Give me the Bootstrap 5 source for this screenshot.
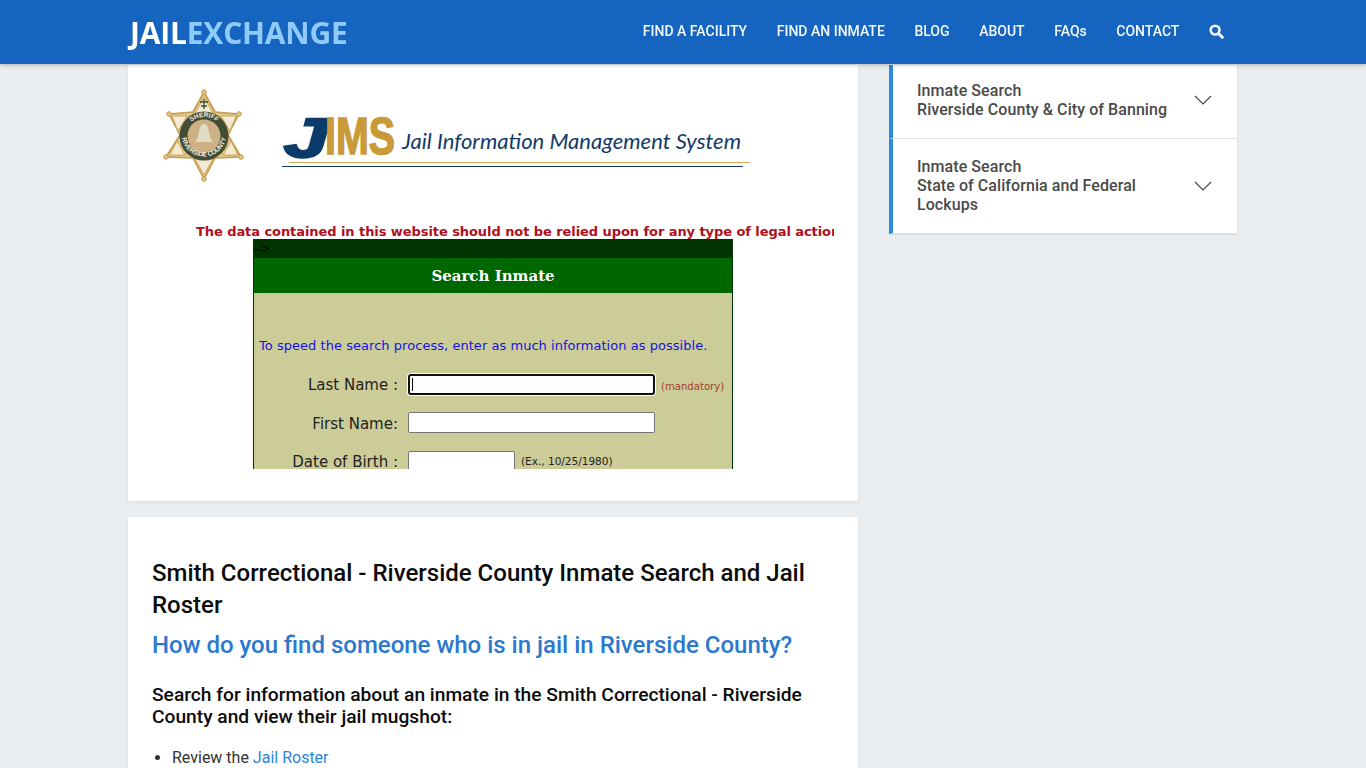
<!DOCTYPE html>
<html lang="en">
<head>
<meta charset="utf-8">
<title>Smith Correctional - Riverside County Inmate Search and Jail Roster</title>
<link rel="stylesheet" href="https://cdn.jsdelivr.net/npm/bootstrap@5.3.0/dist/css/bootstrap.min.css">
<style>
html,body{height:768px;overflow:hidden}
body{background:#eaeef1;font-family:Roboto,sans-serif;color:#333}
.topbar{height:64px;background:#1565c0;box-shadow:0 1px 4px rgba(0,0,0,.25);padding:0}
.wrap-x{width:1110px;margin:0 auto}
.brand-x{font-family:"Open Sans",sans-serif;font-weight:700;font-size:30px;line-height:1;letter-spacing:-.2px;color:#fff;text-decoration:none;padding:1px 0 0 2px}
.brand-x span{color:#90caf9}
.navlink-x{font-size:14px;font-weight:500;color:#f1f8fe;text-decoration:none}
.menu-x{gap:29.6px;padding-right:14px;margin-top:-2px}
.page-x{padding-top:65px;gap:31px;align-items:flex-start}
.maincol{width:730px;flex:none}
.sidecol{width:349px;flex:none}
.panel-x{background:#fff;box-shadow:0 1px 3px rgba(0,0,0,.08)}
.panel-top{height:436px;padding:0 24px;margin-bottom:16px}
.frame-x{width:682px;height:404px;overflow:hidden}
.logo-row{height:150px;padding-top:23px}
.star-x{margin-left:11px;flex:none}
.jims-x{margin-left:37px;flex:none}
.warn-x{font-family:"DejaVu Sans",sans-serif;font-weight:700;font-size:13px;letter-spacing:-.07px;line-height:16px;color:#b00f1c;white-space:nowrap;padding-left:44px;margin-top:9px;height:15px}
.form-x{width:480px;margin:0 0 0 101px;height:230px;overflow:hidden;background:#cccc99;border-left:1px solid #003300;border-right:1px solid #003300;font-family:"DejaVu Sans",sans-serif}
.f-dark{height:19px;background:#003300;font-size:11px;line-height:19px;color:#000;margin:0 -1px}
.f-head{height:35px;background:#006600;color:#fff;font-family:"DejaVu Serif",serif;font-weight:700;font-size:15px;line-height:36px;text-align:center;margin:0 -1px}
.f-note{color:#1414e0;font-size:13px;letter-spacing:.04px;line-height:16px;padding:45px 0 0 5px;white-space:nowrap;height:73px}
.f-row{height:38.5px;font-size:15px;color:#222}
.f-label{width:144px;text-align:right;flex:none;white-space:nowrap}
.f-box{background:#fff;border:1px solid #767676;border-radius:2px;height:21px;margin:0 0 2px 10px;flex:none}
.f-box.tall-x{height:23px;margin:1px 0 0 10px}
.f-box.focus-x{border:2px solid #101010;border-radius:3px;position:relative;box-shadow:0 0 0 1px #fff}
.f-box.focus-x::before{content:"";position:absolute;left:2px;top:2px;bottom:2px;width:1px;background:#000}
.f-hint{font-size:10.5px;margin-left:6px;white-space:nowrap}
.hint-red{color:#a33c2c;font-size:10.1px;margin-top:2px}
.w-long{width:247px}
.w-short{width:107px}
.panel-body-x{padding:40px 24px;height:600px}
.h-one{font-size:24px;font-weight:500;line-height:32px;color:#0b0b0b;margin:0 0 8px}
.h-two{font-size:24px;font-weight:500;line-height:32px;color:#2b78cf;margin:0 0 23px}
.h-three{font-size:19.2px;font-weight:500;line-height:22px;color:#0b0b0b;margin:0 0 18px}
.list-x{font-size:16px;line-height:24px;padding-left:20px;margin:0}
.list-x a{color:#2b84d8;text-decoration:none}
.acc-x{background:#fff;border-left:4px solid #2b8ade;border-right:1px solid #dde2e6;color:#4a4a4a;font-size:16px;letter-spacing:.07px;font-weight:500;line-height:19px;padding:0 25px 0 24px;box-shadow:0 1px 1px rgba(0,0,0,.05)}
.acc-x.one{height:74px;border-bottom:1px solid #dde2e6;padding-bottom:4px}
.acc-x.two{height:95px;border-bottom:1px solid #dde2e6;padding-bottom:2px}
.acc-x.two svg{margin-top:2px}
.acc-text{width:258px}
</style>
</head>
<body>
<nav class="navbar fixed-top topbar">
  <div class="wrap-x d-flex align-items-center justify-content-between h-100">
    <a class="brand-x" href="#">JAIL<span>EXCHANGE</span></a>
    <div class="d-flex align-items-center menu-x">
      <a class="navlink-x" href="#">FIND A FACILITY</a>
      <a class="navlink-x" href="#">FIND AN INMATE</a>
      <a class="navlink-x" href="#">BLOG</a>
      <a class="navlink-x" href="#">ABOUT</a>
      <a class="navlink-x" href="#">FAQs</a>
      <a class="navlink-x" href="#">CONTACT</a>
      <a class="navlink-x d-flex" href="#" aria-label="Search">
        <svg width="15" height="15" viewBox="0 0 16 16" fill="none" stroke="#f1f8fe"><circle cx="6.500" cy="6.500" r="4.700" stroke-width="2.800"/><path d="M10.300 10.300l3.900 3.900" stroke-width="3.200" stroke-linecap="round"/></svg>
      </a>
    </div>
  </div>
</nav>

<div class="wrap-x d-flex page-x">
  <div class="maincol">
    <div class="panel-x panel-top">
      <div class="frame-x">
        <div class="logo-row d-flex">
          <svg width="82" height="96" viewBox="0 0 82 96" class="star-x">
            <polygon points="41,4 52,24 76,26 65,47 78,69 52,70 41,91 30,70 3,69 17,47 6,26 30,24" fill="#e3c986" stroke="#c39a52" stroke-width="1.600" stroke-linejoin="round"/>
            <g fill="#e3c78a" stroke="#c39a52">
              <circle cx="41" cy="4" r="2.300"/><circle cx="76" cy="26" r="2.300"/><circle cx="78" cy="69" r="2.300"/><circle cx="41" cy="91" r="2.300"/><circle cx="3" cy="69" r="2.300"/><circle cx="6" cy="26" r="2.300"/>
            </g>
            <path d="M41 9 30 29H52ZM41 87 30 67H52ZM9 28H24L15 43ZM73 28H58L67 43ZM7 67H22L14 53ZM75 67H60L68 53Z" fill="#f4ead0" stroke="#c39a52" stroke-width=".8"/>
            <path d="M41 11v10M37 14h8M38 18h6" stroke="#3c4a33" stroke-width="1.300" fill="none"/>
            <circle cx="41" cy="48" r="24.500" fill="#414d35"/>
            <circle cx="41" cy="48" r="16.500" fill="#cdb083"/>
            <path d="M41 36c-3 0-4 3-5 8-1 5-2 8-4 10h18c-2-2-3-5-4-10-1-5-2-8-5-8z" fill="#e2dcc4"/>
            <defs>
              <path id="arcT" d="M22 48a19 19 0 0 1 38 0"/>
              <path id="arcB" d="M17.500 46a23.500 23.500 0 0 0 47 0"/>
            </defs>
            <text font-family="Liberation Sans,sans-serif" font-weight="700" font-size="6.500" fill="#f3efe2" text-anchor="middle"><textPath href="#arcT" startOffset="50%">SHERIFF</textPath></text>
            <text font-family="Liberation Sans,sans-serif" font-weight="700" font-size="6.500" fill="#f3efe2" text-anchor="middle" dy="-1"><textPath href="#arcB" startOffset="50%">RIVERSIDE COUNTY</textPath></text>
          </svg>
          <svg width="476" height="96" viewBox="0 0 476 96" class="jims-x">
            <text x="2" y="69" font-family="Liberation Sans,sans-serif" font-weight="700" font-style="italic" font-size="56" fill="#0b3a6b" stroke="#0b3a6b" stroke-width="2.500" textLength="44" lengthAdjust="spacingAndGlyphs">J</text>
            <text x="43" y="66" font-family="Liberation Sans,sans-serif" font-weight="700" font-size="51" fill="#c99a3a" stroke="#c99a3a" stroke-width="1.500" textLength="70" lengthAdjust="spacingAndGlyphs">IMS</text>
            <text x="120" y="61" font-family="Lato,sans-serif" font-style="italic" font-size="22" fill="#123a67" textLength="339" lengthAdjust="spacing">Jail Information Management System</text>
            <rect x="7" y="74" width="461" height="1" fill="#d7a94d"/>
            <rect x="0" y="78" width="461" height="1" fill="#123a67"/>
          </svg>
        </div>
        <div class="warn-x">The data contained in this website should not be relied upon for any type of legal action.</div>
        <div class="form-x">
          <div class="f-dark">--&gt;</div>
          <div class="f-head">Search Inmate</div>
          <div class="f-note">To speed the search process, enter as much information as possible.</div>
          <div class="f-row d-flex align-items-center"><span class="f-label">Last Name :</span><span class="f-box focus-x w-long"></span><span class="f-hint hint-red">(mandatory)</span></div>
          <div class="f-row d-flex align-items-center"><span class="f-label">First Name:</span><span class="f-box w-long"></span></div>
          <div class="f-row d-flex align-items-center"><span class="f-label">Date of Birth :</span><span class="f-box tall-x w-short"></span><span class="f-hint">(Ex., 10/25/1980)</span></div>
        </div>
      </div>
    </div>
    <div class="panel-x panel-body-x">
      <h1 class="h-one">Smith Correctional - Riverside County Inmate Search and Jail Roster</h1>
      <h2 class="h-two">How do you find someone who is in jail in Riverside County?</h2>
      <h3 class="h-three">Search for information about an inmate in the Smith Correctional - Riverside County and view their jail mugshot:</h3>
      <ul class="list-x"><li>Review the <a href="#">Jail Roster</a></li></ul>
    </div>
  </div>
  <div class="sidecol">
    <div class="acc-x one d-flex align-items-center justify-content-between">
      <div class="acc-text text-nowrap">Inmate Search<br>Riverside County &amp; City of Banning</div>
      <svg width="18" height="10" viewBox="0 0 18 10" fill="none" stroke="#444" stroke-width="1.100"><path d="M1 1l8 8 8-8"/></svg>
    </div>
    <div class="acc-x two d-flex align-items-center justify-content-between">
      <div class="acc-text">Inmate Search<br>State of California and Federal Lockups</div>
      <svg width="18" height="10" viewBox="0 0 18 10" fill="none" stroke="#444" stroke-width="1.100"><path d="M1 1l8 8 8-8"/></svg>
    </div>
  </div>
</div>
<script src="https://cdn.jsdelivr.net/npm/bootstrap@5.3.0/dist/js/bootstrap.bundle.min.js"></script>
</body>
</html>
